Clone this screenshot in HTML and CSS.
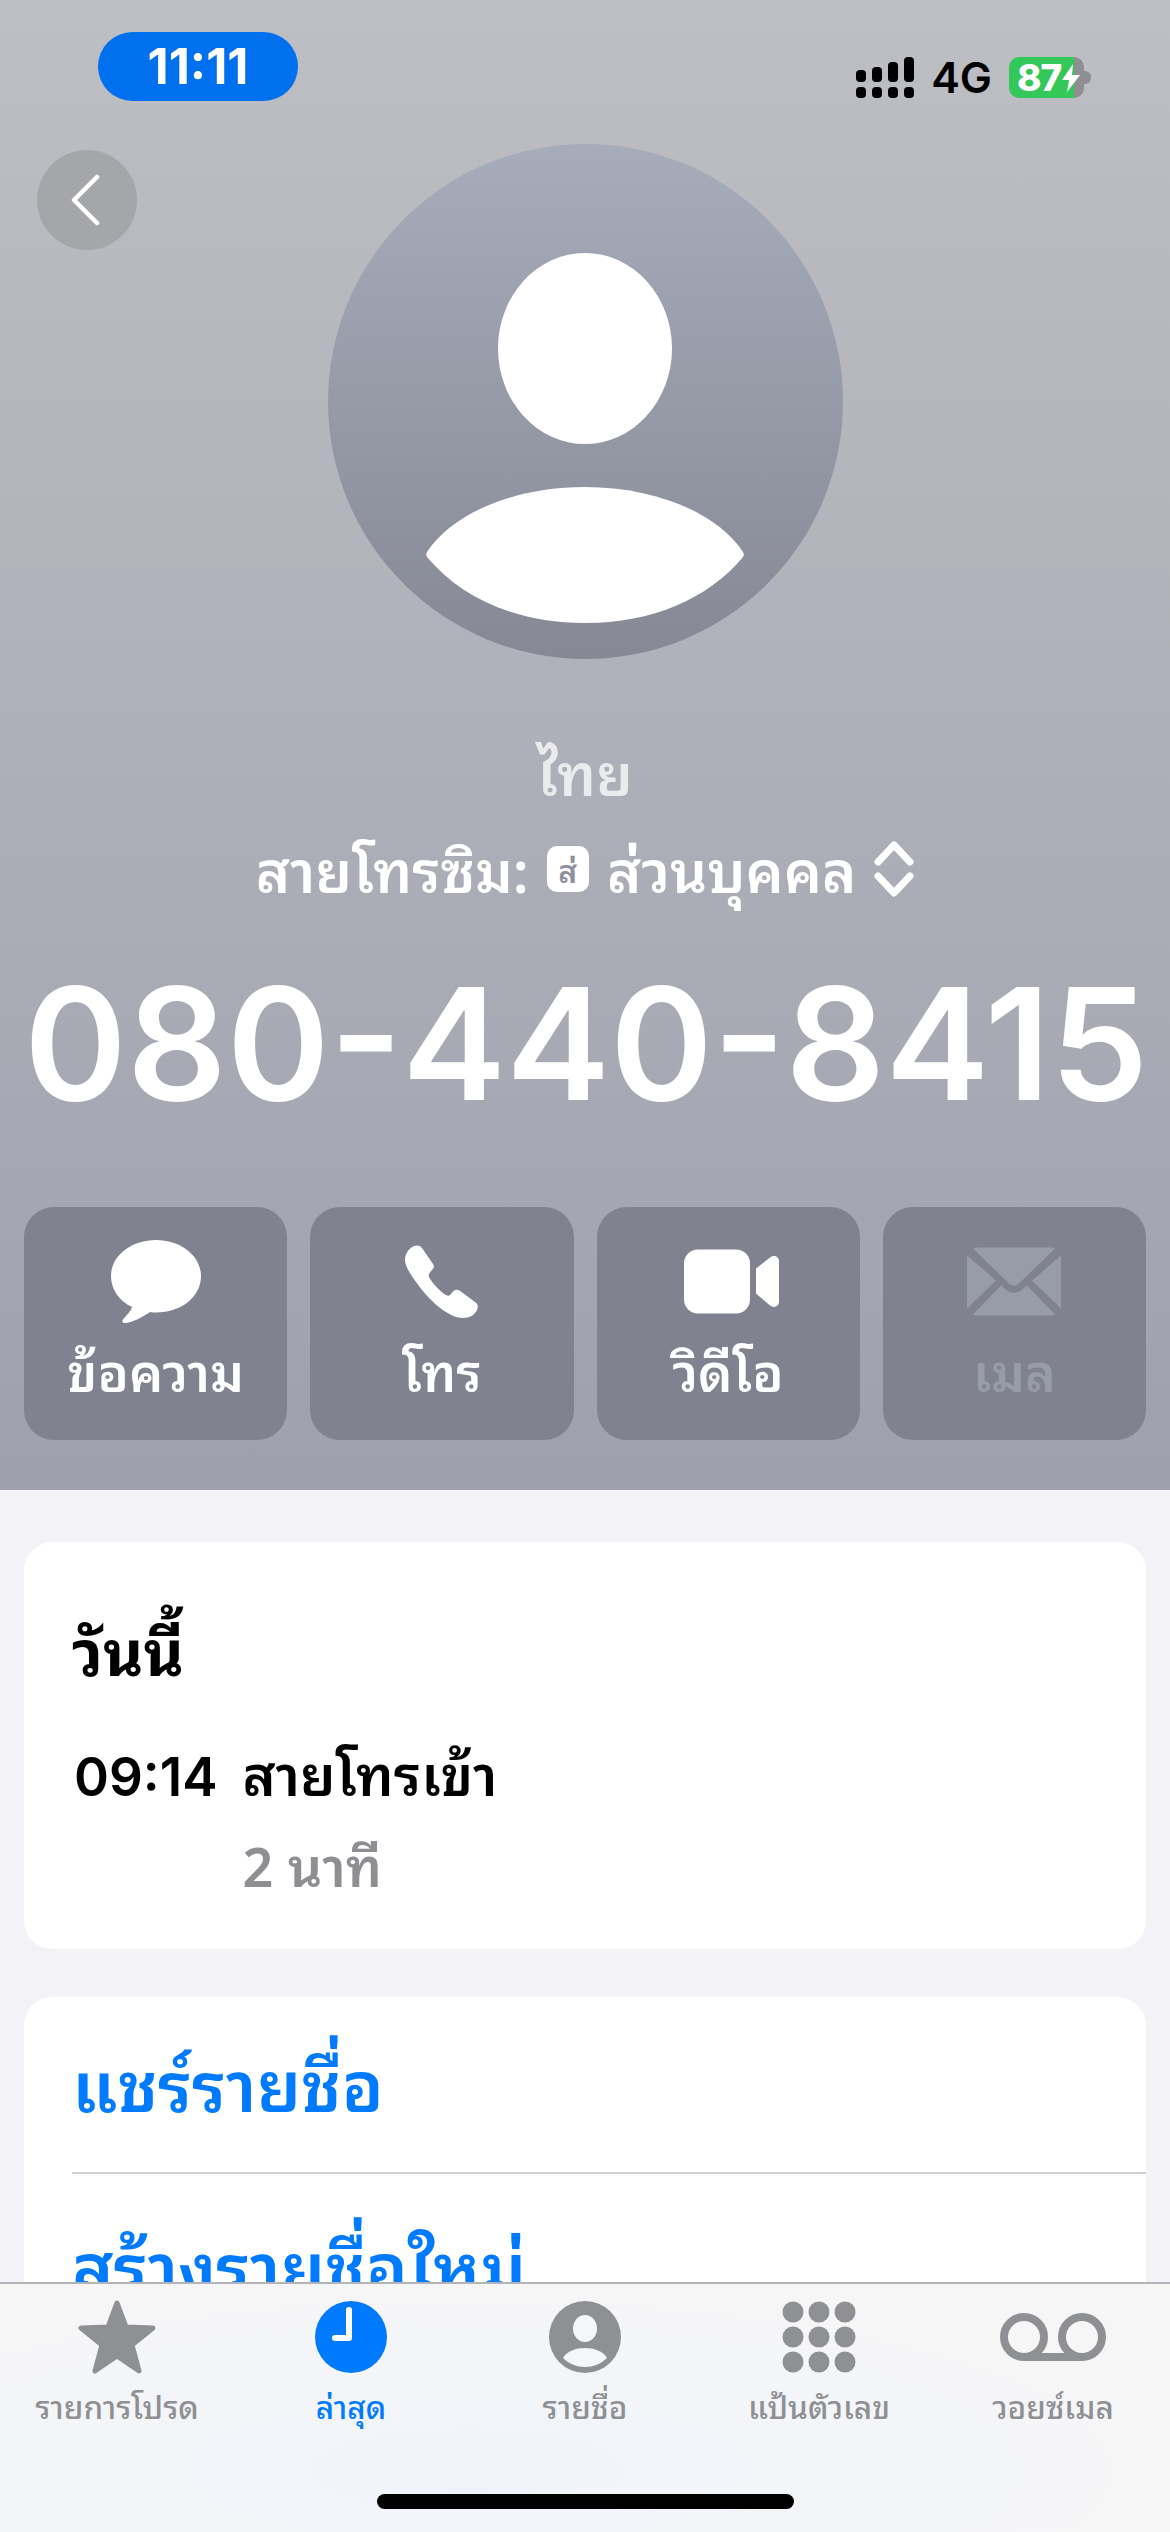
FILE: index.html
```html
<!DOCTYPE html>
<html lang="th">
<head>
    <meta charset="UTF-8">
    <meta name="viewport" content="width=device-width, initial-scale=1.0">
    <title>080-440-8415</title>
    <link rel="stylesheet" href="styles.css">
</head>
<body>

<div class="phone">
    <!-- Contact Header -->
    <div class="header">
        <div class="status-bar">
            <div class="time-pill">11:11</div>
            <div class="status-right">
                <svg class="signal" viewBox="0 0 58 41" width="58" height="41">
                    <rect x="0" y="13" width="10" height="12" rx="4"/>
                    <rect x="16" y="10" width="10" height="15" rx="4"/>
                    <rect x="32" y="5" width="10" height="20" rx="4"/>
                    <rect x="48" y="0" width="10" height="25" rx="4"/>
                    <rect x="0" y="30" width="10" height="11" rx="4"/>
                    <rect x="16" y="30" width="10" height="11" rx="4"/>
                    <rect x="32" y="30" width="10" height="11" rx="4"/>
                    <rect x="48" y="30" width="10" height="11" rx="4"/>
                </svg>
                <span class="network">4G</span>
                <div class="battery">
                    <span class="battery-level">87</span>
                    <svg class="battery-bolt" viewBox="0 0 18 28" width="18" height="28">
                        <path d="M11 0L0 16H7L5 28L18 11H10L11 0Z"/>
                    </svg>
                    <i class="battery-nub"></i>
                </div>
            </div>
        </div>

        <button class="back-btn">
            <svg viewBox="0 0 30 52" width="30" height="52">
                <path d="M27 3L4 26L27 49"/>
            </svg>
        </button>

        <div class="avatar">
            <div class="avatar-head"></div>
            <svg class="avatar-body" viewBox="0 0 318 136" width="318" height="136">
                <path d="M1 65C28 24 92 0 159 0C226 0 290 24 317 65C318 67 318 68 317 70C282 112 226 136 159 136C92 136 36 112 1 70C0 68 0 67 1 65Z"/>
            </svg>
        </div>

        <div class="carrier">ไทย</div>
        <div class="sim-row">
            <span>สายโทรซิม:</span>
            <span class="sim-badge">ส่</span>
            <span>ส่วนบุคคล</span>
            <svg class="sim-chevrons" viewBox="0 0 40 56" width="40" height="56">
                <path d="M4 21L20 4L36 21"/>
                <path d="M4 35L20 52L36 35"/>
            </svg>
        </div>
        <div class="number">080-440-8415</div>

        <!-- Action Buttons -->
        <div class="actions">
            <div class="action">
                <svg class="action-icon" viewBox="0 0 90 83" width="90" height="83">
                    <path d="M45 0C70 0 90 16 90 36C90 57 70 72.500 45 72.500C43 72.500 41 72.500 39 72C32 77 20 83 14 83C11 83 11 81 12 79.500C15 76 20 71 21 67C8 61 0 49 0 36C0 16 20 0 45 0Z"/>
                </svg>
                <span>ข้อความ</span>
            </div>
            <div class="action">
                <svg class="action-icon" viewBox="0 0 73 73" width="73" height="73">
                    <path d="M9 1C12 0 15 0 17 3L28 19C29.500 21.500 29 23 27 25L24.500 28C23.500 29.500 23.500 31 24.500 33C28 39 36 47 41 50C43 51 44 51 45.500 49.500L48 46.500C50 44.500 52 44 54.500 45.500L70 57C73 59 73.500 62 72 65C69.500 70 65 73 58 73C44 73 26 57 14 41C5 29 0 21 0 15C0 9 4 3 9 1Z"/>
                </svg>
                <span>โทร</span>
            </div>
            <div class="action">
                <svg class="action-icon video-icon" viewBox="0 0 95 64" width="95" height="64">
                    <rect x="0" y="0" width="66" height="64" rx="14"/>
                    <path d="M72 19L86 8C90 5 95 7 95 12V52C95 57 90 59 86 56L72 44Z"/>
                </svg>
                <span>วิดีโอ</span>
            </div>
            <div class="action disabled">
                <svg class="action-icon" viewBox="0 0 94 68" width="94" height="68">
                    <path d="M6 1C8 0 10 0 12 0H82C84 0 86 0 88 1L52 36C49 39 45 39 42 36Z"/>
                    <path d="M0 8L29 33L0 61Z"/>
                    <path d="M94 8L65 33L94 61Z"/>
                    <path d="M6 67L34 38L40 43C44 46 50 46 54 43L60 38L88 67C86 68 84 68 82 68H12C10 68 8 68 6 67Z"/>
                </svg>
                <span>เมล</span>
            </div>
        </div>
    </div>

    <!-- Details -->
    <div class="content">
        <div class="card history">
            <h2>วันนี้</h2>
            <div class="call-row">
                <span class="call-time">09:14</span>
                <div>
                    <div class="call-type">สายโทรเข้า</div>
                    <div class="call-length">2 นาที</div>
                </div>
            </div>
        </div>

        <div class="card links">
            <div class="link-row">แชร์รายชื่อ</div>
            <div class="link-row">สร้างรายชื่อใหม่</div>
        </div>
    </div>

    <!-- Tab Bar -->
    <div class="tab-bar">
        <div class="tab">
            <svg viewBox="0 0 78 74" width="78" height="74">
                <path class="star" d="M39 3L48 27L75 28L54 45L61 71L39 56L17 71L24 45L3 28L30 27Z"/>
            </svg>
            <span>รายการโปรด</span>
        </div>
        <div class="tab active">
            <svg viewBox="0 0 72 72" width="72" height="72">
                <circle cx="36" cy="36" r="36"/>
                <path class="clock-hands" d="M34 9V37H20"/>
            </svg>
            <span>ล่าสุด</span>
        </div>
        <div class="tab">
            <svg viewBox="0 0 72 72" width="72" height="72">
                <circle cx="36" cy="36" r="36"/>
                <ellipse class="cut" cx="36" cy="27.500" rx="12" ry="13.500"/>
                <path class="cut" d="M14 57C18 50 27 47 36 47C45 47 54 50 58 57C52 63 44 66 36 66C28 66 20 63 14 57Z"/>
            </svg>
            <span>รายชื่อ</span>
        </div>
        <div class="tab">
            <svg viewBox="0 0 74 72" width="74" height="72">
                <circle cx="11" cy="11" r="10.500"/><circle cx="37" cy="11" r="10.500"/><circle cx="63" cy="11" r="10.500"/>
                <circle cx="11" cy="36" r="10.500"/><circle cx="37" cy="36" r="10.500"/><circle cx="63" cy="36" r="10.500"/>
                <circle cx="11" cy="61" r="10.500"/><circle cx="37" cy="61" r="10.500"/><circle cx="63" cy="61" r="10.500"/>
            </svg>
            <span>แป้นตัวเลข</span>
        </div>
        <div class="tab">
            <svg viewBox="0 0 106 72" width="106" height="72">
                <g class="voicemail">
                    <circle cx="24" cy="36" r="20"/>
                    <circle cx="82" cy="36" r="20"/>
                    <path d="M24 56H82"/>
                </g>
            </svg>
            <span>วอยซ์เมล</span>
        </div>
        <div class="home-bar"></div>
    </div>
</div>

</body>
</html>
```

FILE: styles.css
```css
/* Global Reset */
*, *::before, *::after {
    margin: 0;
    padding: 0;
    box-sizing: border-box;
}

:root {
    --blue: #007AFF;
    --gray: #8E8E93;
    --thai-font: "Noto Sans Thai Looped", "Noto Sans Thai", "Inter", "Noto Sans", sans-serif;
}

body {
    font-family: var(--thai-font);
    background-color: #F2F2F7;
    color: #000;
}

.phone {
    position: relative;
    width: 1170px;
    height: 2532px;
    overflow: hidden;
}

/* Contact Header */
.header {
    position: relative;
    height: 1490px;
    padding: 0 24px;
    background-image: linear-gradient(180deg, #BEBFC4, #9EA0AD);
    color: #fff;
}

.status-bar {
    display: flex;
    justify-content: space-between;
    height: 144px;
    padding: 32px 62px 0 74px;
}

.time-pill {
    width: 200px;
    height: 69px;
    border-radius: 35px;
    background-color: #0070EE;
    font-family: "Inter", sans-serif;
    font-size: 49px;
    font-weight: 700;
    line-height: 69px;
    text-align: center;
}

.status-right {
    display: flex;
    align-items: flex-start;
    margin-top: 25px;
    color: #000;
}

.signal {
    fill: #000;
}

.network {
    margin-left: 17px;
    font-family: "Inter", sans-serif;
    font-size: 43px;
    font-weight: 600;
    line-height: 41px;
}

.battery {
    position: relative;
    display: flex;
    align-items: center;
    width: 75px;
    height: 41px;
    margin-left: 17px;
    padding-left: 8px;
    border-radius: 10px;
    background-image: linear-gradient(90deg, #34C759 65px, #8E8E93 65px);
}

.battery-level {
    font-family: "Inter", sans-serif;
    font-size: 37px;
    font-weight: 800;
    line-height: 41px;
    color: #fff;
    letter-spacing: -1px;
}

.battery-bolt {
    fill: #fff;
    margin-left: 1px;
}

.battery-nub {
    position: absolute;
    right: -7px;
    top: 14px;
    width: 7px;
    height: 13px;
    border-radius: 0 6px 6px 0;
    background-color: #8E8E93;
}

.back-btn {
    position: absolute;
    left: 37px;
    top: 150px;
    display: flex;
    align-items: center;
    justify-content: center;
    width: 100px;
    height: 100px;
    border: none;
    border-radius: 50%;
    background-color: #A5A6AA;
}

.back-btn svg {
    fill: none;
    stroke: #fff;
    stroke-width: 4.500;
    stroke-linecap: round;
    stroke-linejoin: round;
    margin-right: 4px;
}

/* Avatar */
.avatar {
    display: flex;
    flex-direction: column;
    align-items: center;
    width: 515px;
    height: 515px;
    margin: 0 auto;
    padding-top: 109px;
    border-radius: 50%;
    background-image: linear-gradient(180deg, #A7ACBB, #868994);
}

.avatar-head {
    width: 174px;
    height: 191px;
    border-radius: 50%;
    background-color: #fff;
}

.avatar-body {
    fill: #fff;
    margin-top: 43px;
}

/* Name Lines */
.carrier {
    margin-top: 71px;
    font-size: 58px;
    font-weight: 600;
    line-height: 80px;
    text-align: center;
    color: rgba(255, 255, 255, 0.75);
}

.sim-row {
    display: flex;
    align-items: center;
    justify-content: center;
    gap: 18px;
    height: 90px;
    margin-top: 11px;
    font-size: 58px;
    font-weight: 600;
}

.sim-badge {
    width: 42px;
    height: 46px;
    margin-top: 6px;
    border-radius: 10px;
    background-color: #fff;
    color: #8F919E;
    font-size: 32px;
    line-height: 46px;
    text-align: center;
}

.sim-chevrons {
    margin-top: 6px;
    fill: none;
    stroke: #fff;
    stroke-width: 7;
    stroke-linecap: round;
    stroke-linejoin: round;
}

.number {
    margin-top: 48px;
    font-family: "Inter", sans-serif;
    font-size: 156px;
    font-weight: 600;
    line-height: 170px;
    text-align: center;
    white-space: nowrap;
}

/* Action Buttons */
.actions {
    display: grid;
    grid-template-columns: repeat(4, 1fr);
    gap: 23px;
    margin-top: 78px;
}

.action {
    display: flex;
    flex-direction: column;
    align-items: center;
    height: 233px;
    padding-top: 33px;
    border-radius: 30px;
    background-color: #808290;
}

.action-icon {
    flex: none;
    height: 83px;
    fill: #fff;
}

.video-icon {
    margin-left: 6px;
}

.action span {
    margin-top: 10px;
    font-size: 52px;
    font-weight: 600;
    line-height: 72px;
}

.action.disabled .action-icon {
    fill: #989BA8;
}

.action.disabled span {
    color: #989BA8;
}

/* Cards */
.content {
    padding: 52px 24px 0;
}

.card {
    background-color: #fff;
    border-radius: 28px;
    margin-bottom: 48px;
}

.history {
    height: 407px;
    padding: 64px 48px 0 48px;
}

.history h2 {
    font-size: 62px;
    font-weight: 700;
    line-height: 84px;
}

.call-row {
    display: flex;
    gap: 25px;
    margin-top: 41px;
    padding-left: 2px;
}

.call-time {
    margin-top: 6px;
    font-family: "Inter", sans-serif;
    font-size: 53px;
    font-weight: 600;
    line-height: 80px;
}

.call-type {
    font-size: 56px;
    font-weight: 600;
    line-height: 80px;
}

.call-length {
    margin-top: 12px;
    font-size: 54px;
    font-weight: 600;
    line-height: 80px;
    color: var(--gray);
}

.links {
    padding-left: 48px;
}

.link-row {
    height: 177px;
    font-size: 70px;
    font-weight: 600;
    line-height: 167px;
    color: var(--blue);
    border-bottom: 2px solid #CFCFD1;
}

.link-row:last-child {
    line-height: 177px;
    border-bottom: none;
}

/* Tab Bar */
.tab-bar {
    position: absolute;
    left: 0;
    right: 0;
    bottom: 0;
    display: grid;
    grid-template-columns: repeat(5, 234px);
    height: 250px;
    border-top: 2px solid #B4B4B8;
    background-color: #F5F6F8;
    background-image: radial-gradient(ellipse at 40% 75%, #F0F4FA, #F6F6F7 70%);
}

.tab {
    display: flex;
    flex-direction: column;
    align-items: center;
    height: 170px;
    padding-top: 16px;
    font-size: 31.5px;
    font-weight: 500;
    color: #8E9093;
    fill: #8E9093;
}

.tab svg {
    flex: none;
    height: 74px;
}

.tab span {
    margin-top: 9px;
    line-height: 44px;
    white-space: nowrap;
}

.tab.active {
    color: var(--blue);
    fill: var(--blue);
}

.star {
    stroke: #8E9093;
    stroke-width: 5;
    stroke-linejoin: round;
}

.clock-hands {
    fill: none;
    stroke: #fff;
    stroke-width: 6;
    stroke-linecap: round;
    stroke-linejoin: round;
}

.cut {
    fill: #F5F6F8;
}

.voicemail {
    fill: none;
    stroke: #8E9093;
    stroke-width: 8;
}

.home-bar {
    position: absolute;
    left: 377px;
    top: 210px;
    width: 417px;
    height: 15px;
    border-radius: 8px;
    background-color: #000;
}
```
